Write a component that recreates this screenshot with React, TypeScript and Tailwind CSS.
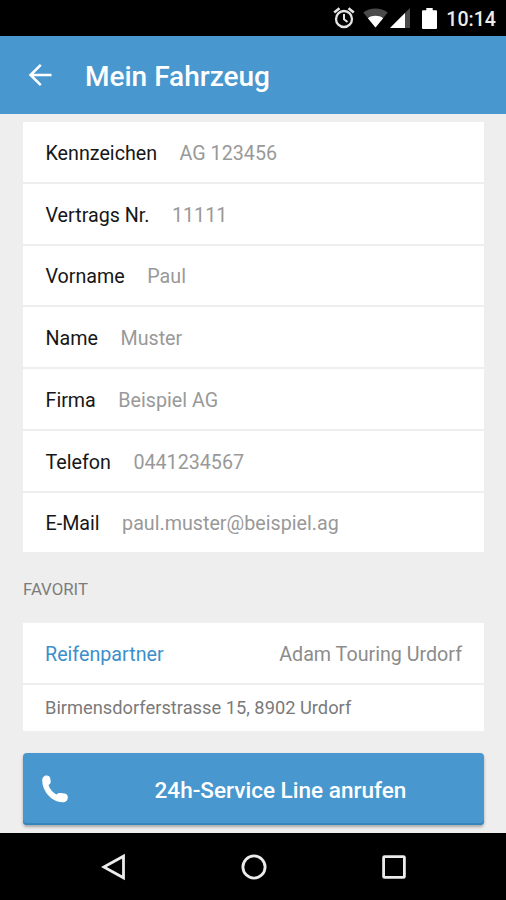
const fields = [
  { label: 'Kennzeichen', value: 'AG 123456' },
  { label: 'Vertrags Nr.', value: '11111' },
  { label: 'Vorname', value: 'Paul' },
  { label: 'Name', value: 'Muster' },
  { label: 'Firma', value: 'Beispiel AG' },
  { label: 'Telefon', value: '0441234567' },
  { label: 'E-Mail', value: 'paul.muster@beispiel.ag' },
];

function StatusBar() {
  return (
    <div className="h-9 shrink-0 bg-black flex items-center justify-end pr-[10px] text-white">
      <svg className="mr-[8px]" width="22" height="22" viewBox="0 0 22 22" fill="none" stroke="#e4e4e4">
        <circle cx="11" cy="12" r="8" strokeWidth="2.3" />
        <path d="M11 7v5.300l3.500 2.700" strokeWidth="2" />
        <path d="M1.200 5.500 6.500 1.300M20.800 5.500l-5.300-4.200" strokeWidth="2.600" />
      </svg>
      <svg className="mr-[2px]" width="25" height="20" viewBox="0 0 25 20">
        <path d="M12.5 19.5 0.3 4.6C7 -1 18 -1 24.7 4.6Z" fill="#4a4a4a" />
        <path d="M12.5 19.5 4.900 10.200C9 7 16 7 20.100 10.200Z" fill="#fff" />
      </svg>
      <svg className="mr-3" width="20" height="20" viewBox="0 0 20 20">
        <path d="M20 0V20H0Z" fill="#4a4a4a" />
        <path d="M15 5V20H0Z" fill="#fff" />
      </svg>
      <svg className="mr-[9px]" width="15" height="21" viewBox="0 0 15 21" fill="#fff">
        <path d="M4.3 0h6.4v2.2H14a1 1 0 0 1 1 1V20a1 1 0 0 1-1 1H1a1 1 0 0 1-1-1V3.200a1 1 0 0 1 1-1h3.300z" />
      </svg>
      <span className="text-[19.600px] leading-none font-medium text-[#ececec] pt-[3px]">10:14</span>
    </div>
  );
}

function Header() {
  return (
    <header className="h-[78px] shrink-0 bg-[#4898cf] flex items-center pl-[28px] text-white">
      <svg width="24" height="22" viewBox="0 0 24 22" fill="none" stroke="currentColor" strokeWidth="2.500">
        <path d="M23.500 11H2.500M12.800 0.900 2.500 11l10.300 10.100" />
      </svg>
      <h1 className="ml-[33px] pt-[3px] text-[28px] leading-none font-medium">Mein Fahrzeug</h1>
    </header>
  );
}

function NavBar() {
  return (
    <nav className="h-[67px] shrink-0 bg-black flex items-center pl-[101px]">
      <svg width="25" height="28" viewBox="0 0 25 28" fill="none" stroke="#ececec" strokeWidth="2.800">
        <path d="M22.500 3.200v21.600L2.800 14z" />
      </svg>
      <svg className="ml-[115px]" width="26" height="26" viewBox="0 0 26 26" fill="none" stroke="#ececec" strokeWidth="2.800">
        <circle cx="13" cy="13" r="11.100" />
      </svg>
      <svg className="ml-[115px]" width="24" height="24" viewBox="0 0 24 24" fill="none" stroke="#ececec" strokeWidth="2.800">
        <rect x="1.600" y="1.600" width="20.800" height="20.800" rx="1" />
      </svg>
    </nav>
  );
}

export default function App() {
  return (
    <div className="h-[900px] w-full flex flex-col bg-[#eeeeee] font-[Roboto,sans-serif] overflow-hidden">
      <StatusBar />
      <Header />

      <main className="flex-1 pl-[23px] pr-[22px] pt-2 min-h-0 flex flex-col">
        <section className="h-[430.500px] shrink-0 flex flex-col gap-[2px]">
          {fields.map((f) => (
            <div key={f.label} className="flex-1 bg-white flex items-center gap-[22.500px] pl-[22.500px] pr-[22px] pt-[3.500px] text-[19.700px] leading-none">
              <span className="text-[#161616]">{f.label}</span>
              <span className="text-[#999999]">{f.value}</span>
            </div>
          ))}
        </section>

        <h2 className="h-[70.500px] shrink-0 flex items-center pt-[4px] text-[16.800px] leading-none text-[#7c7c7c]">FAVORIT</h2>

        <section className="shrink-0 flex flex-col gap-[2px]">
          <div className="h-[60px] bg-white flex items-center justify-between px-[22px] pt-[3px] text-[19.700px] leading-none">
            <span className="text-[#3c8fcb]">Reifenpartner</span>
            <span className="text-[#8c8c8c]">Adam Touring Urdorf</span>
          </div>
          <div className="h-[46px] bg-white flex items-center px-[22px] pt-px text-[18.300px] leading-none text-[#7a7a7a]">
            Birmensdorferstrasse 15, 8902 Urdorf
          </div>
        </section>

        <button className="mt-[22px] h-[72px] shrink-0 rounded-[4px] bg-[#4898cf] shadow-[inset_0_-2px_0_#3585bd,0_2px_3px_rgba(0,0,0,0.3)] flex items-center pl-[19px] text-white">
          <svg width="26" height="28" viewBox="0 0 26 28" fill="#fff">
            <path d="M0.200 5.500C0.100 2.500 2.200 0.500 4.700 0.500c2 0 3.300 1.200 3.600 3l.4 2.700c.2 1.700-.6 2.900-2.200 3.900 1.400 4.300 4 7.500 8 9.400 1.100-1.300 2.300-1.800 4-1.500l4.300.6c1.900.3 3 1.600 3 3.600 0 3-1.900 5-5.200 5C10.500 27.200 0.700 17.500 0.200 5.500z" />
          </svg>
          <span className="ml-[86.500px] pt-[4px] text-[22.550px] leading-none font-medium">24h-Service Line anrufen</span>
        </button>
      </main>

      <NavBar />
    </div>
  );
}
